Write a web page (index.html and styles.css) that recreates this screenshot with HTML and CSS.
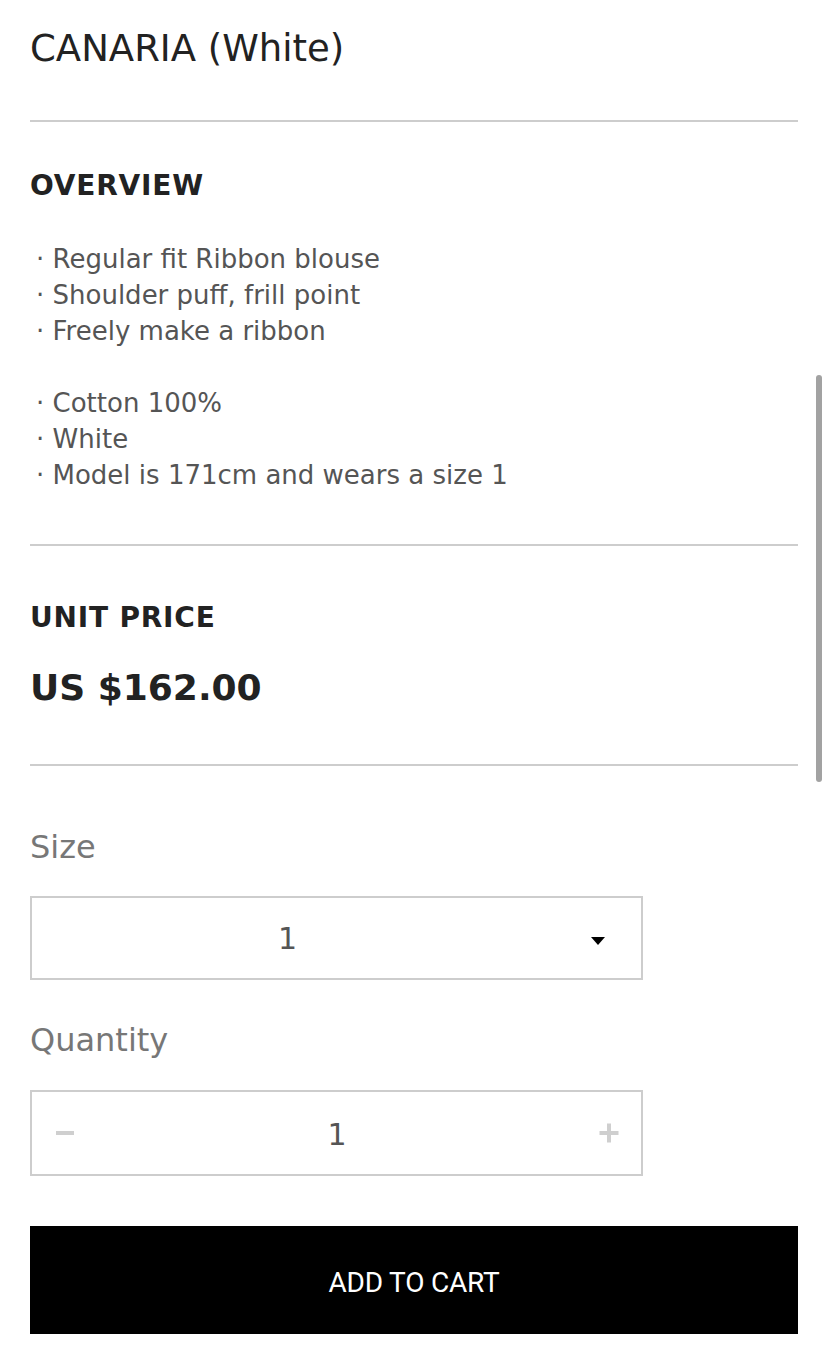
FILE: index.html
```html
<!DOCTYPE html>
<html lang="en">
<head>
<meta charset="utf-8">
<title>CANARIA (White)</title>
<link rel="stylesheet" href="styles.css">
</head>
<body>
<main class="page">
  <h1 class="title">CANARIA (White)</h1>
  <hr class="rule rule-title">

  <h2 class="heading heading-overview">OVERVIEW</h2>
  <ul class="desc">
    <li>· Regular fit Ribbon blouse</li>
    <li>· Shoulder puff, frill point</li>
    <li>· Freely make a ribbon</li>
    <li class="blank">&nbsp;</li>
    <li>· Cotton 100%</li>
    <li>· White</li>
    <li>· Model is 171cm and wears a size 1</li>
  </ul>
  <hr class="rule rule-desc">

  <h2 class="heading heading-price">UNIT PRICE</h2>
  <div class="price">US $162.00</div>
  <hr class="rule rule-price">

  <div class="label label-size">Size</div>
  <div class="field select">
    <span class="select-value">1</span>
    <svg class="caret" width="14" height="8" viewBox="0 0 14 8"><path d="M0 0H14L7 8Z" fill="#000"/></svg>
  </div>

  <div class="label label-qty">Quantity</div>
  <div class="field qty">
    <svg class="qty-btn" width="20" height="20" viewBox="0 0 20 20"><rect x="1" y="8" width="18" height="4" fill="#cfcfcf"/></svg>
    <span class="qty-value">1</span>
    <svg class="qty-btn" width="20" height="20" viewBox="0 0 20 20"><rect x="0.5" y="8" width="19" height="4" fill="#cfcfcf"/><rect x="8" y="0.5" width="4" height="19" fill="#cfcfcf"/></svg>
  </div>

  <button class="cart" type="button">ADD TO CART</button>
</main>
<div class="scrollbar"></div>
</body>
</html>
```

FILE: styles.css
```css
html, body {
  margin: 0;
  padding: 0;
  background: #fff;
}

body {
  font-family: "DejaVu Sans", Verdana, sans-serif;
  color: #222;
  width: 828px;
  height: 1363px;
  overflow: hidden;
}

.page {
  padding: 25px 30px 0;
}

.title {
  margin: 0;
  font-size: 37px;
  line-height: 48px;
  font-weight: normal;
  color: #222;
}

.rule {
  margin: 0;
  border: 0;
  height: 2px;
  background: #cdcdcd;
}

.rule-title { margin-top: 47px; }
.rule-desc { margin-top: 51px; }
.rule-price { margin-top: 54px; }

.heading {
  margin: 0;
  font-size: 28px;
  line-height: 36px;
  font-weight: bold;
  letter-spacing: 0.8px;
  color: #222;
}

.heading-overview { margin-top: 46px; }
.heading-price { margin-top: 54px; }

.desc {
  list-style: none;
  margin: 37px 0 0;
  padding: 0 0 0 6px;
  font-size: 26px;
  line-height: 36px;
  color: #555;
}

.desc li {
  height: 36px;
  white-space: nowrap;
}

.price {
  margin-top: 30px;
  font-size: 36px;
  line-height: 44px;
  font-weight: bold;
  color: #222;
}

.label {
  font-size: 32px;
  line-height: 40px;
  color: #777;
}

.label-size { margin-top: 61px; }
.label-qty { margin-top: 40px; }

.field {
  box-sizing: border-box;
  width: 613px;
  border: 2px solid #cdcdcd;
  display: flex;
  align-items: center;
  margin-top: 29px;
}

.select {
  height: 84px;
  padding: 0 36px 0 0;
}

.select-value {
  flex: 1;
  text-align: center;
  padding-right: 48px;
  font-size: 30px;
  color: #555;
}

.caret {
  display: block;
  margin-top: 5px;
}

.qty {
  height: 86px;
  margin-top: 30px;
  padding: 0 22px 0 23px;
  justify-content: space-between;
}

.qty-btn {
  display: block;
}

.qty-value {
  font-size: 30px;
  color: #555;
  margin-top: 2px;
}

.cart {
  display: block;
  box-sizing: border-box;
  width: 768px;
  height: 108px;
  margin-top: 50px;
  border: 0;
  background: #000;
  color: #fff;
  font-family: Roboto, "Liberation Sans", sans-serif;
  font-size: 28px;
  letter-spacing: -0.2px;
  font-weight: normal;
  padding: 4px 0 0;
}

.scrollbar {
  position: fixed;
  top: 375px;
  right: 6px;
  width: 6px;
  height: 407px;
  border-radius: 3px;
  background: #a2a2a2;
}
```
